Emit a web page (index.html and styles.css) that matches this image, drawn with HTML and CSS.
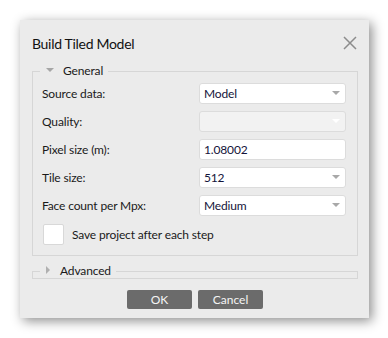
FILE: index.html
```html
<!DOCTYPE html>
<html>
<head>
    <title>Build Tiled Model</title>
    <link rel="stylesheet" href="styles.css">
</head>
<body>
    <div class="dialog">
        <!-- Title bar -->
        <div class="dialog-header">
            <span class="dialog-title">Build Tiled Model</span>
            <svg class="close" width="14" height="14" viewBox="0 0 14 14">
                <path d="M1 1 L13 13 M13 1 L1 13" stroke="#8c8c8c" stroke-width="1.5" fill="none"/>
            </svg>
        </div>

        <!-- General group -->
        <div class="group">
            <div class="group-title">
                <span class="arrow-down"></span>
                <span>General</span>
            </div>
            <div class="form-grid">
                <label>Source data:</label>
                <div class="combo">Model<span class="combo-arrow"></span></div>

                <label>Quality:</label>
                <div class="combo disabled"><span class="combo-arrow"></span></div>

                <label>Pixel size (m):</label>
                <div class="field">1.08002</div>

                <label>Tile size:</label>
                <div class="combo">512<span class="combo-arrow"></span></div>

                <label>Face count per Mpx:</label>
                <div class="combo">Medium<span class="combo-arrow"></span></div>
            </div>
            <div class="check-row">
                <span class="checkbox"></span>
                <span>Save project after each step</span>
            </div>
        </div>

        <!-- Advanced group (collapsed) -->
        <div class="group collapsed">
            <div class="group-title">
                <span class="arrow-right"></span>
                <span>Advanced</span>
            </div>
        </div>

        <!-- Buttons -->
        <div class="buttons">
            <button class="btn">OK</button>
            <button class="btn">Cancel</button>
        </div>
    </div>
</body>
</html>
```

FILE: styles.css
```css
/* Page */
body {
    margin: 0;
    padding: 20px;
    background-color: #ffffff;
    font-family: Lato, "Noto Sans", sans-serif;
    font-size: 12px;
    letter-spacing: -0.15px;
    color: #1a1a1a;
}

/* Dialog window */
.dialog {
    width: 349px;
    height: 298px;
    box-sizing: border-box;
    padding: 8px 11px 0 12px;
    background-color: #ebebeb;
    box-shadow: 3px 3px 11px rgba(0, 0, 0, 0.45);
}

.dialog-header {
    display: flex;
    justify-content: space-between;
    align-items: center;
    height: 30px;
}

.dialog-title {
    font-size: 14px;
    letter-spacing: -0.3px;
    color: #111;
}

.close {
    margin-right: 1px;
}

/* Group boxes */
.group {
    border: 1px solid #d6d6d6;
    margin-top: 13px;
    padding: 0 11px 10px 9px;
}

.group-title {
    display: flex;
    align-items: center;
    gap: 9px;
    width: fit-content;
    height: 12px;
    margin: -8px 0 7px -2px;
    padding: 0 5px 0 6px;
    background-color: #ebebeb;
}

.arrow-down {
    width: 0;
    height: 0;
    border-left: 4px solid transparent;
    border-right: 4px solid transparent;
    border-top: 4px solid #a6a6a6;
}

.arrow-right {
    width: 0;
    height: 0;
    border-top: 4px solid transparent;
    border-bottom: 4px solid transparent;
    border-left: 4px solid #b0b0b0;
}

.group.collapsed {
    height: 6px;
    padding-bottom: 0;
    margin-top: 15px;
}

.group.collapsed .group-title {
    gap: 10px;
}

/* Form rows */
.form-grid {
    display: grid;
    grid-template-columns: 157px 147px;
    grid-auto-rows: 21px;
    row-gap: 7px;
    align-items: center;
}

.combo,
.field {
    position: relative;
    height: 21px;
    box-sizing: border-box;
    padding-left: 4px;
    line-height: 19px;
    background-color: #ffffff;
    border: 1px solid #dcdcdc;
    border-radius: 3px;
    color: #14143a;
}

.combo.disabled {
    background-color: #f2f2f2;
}

.combo-arrow {
    position: absolute;
    right: 5px;
    top: 7px;
    width: 0;
    height: 0;
    border-left: 4px solid transparent;
    border-right: 4px solid transparent;
    border-top: 4px solid #a8a8a8;
}

.combo.disabled .combo-arrow {
    border-top-color: #ffffff;
}

/* Checkbox */
.check-row {
    display: flex;
    align-items: center;
    gap: 8px;
    margin-top: 8px;
    margin-left: 1px;
}

.checkbox {
    width: 21px;
    height: 21px;
    box-sizing: border-box;
    background-color: #ffffff;
    border: 1px solid #d8d8d8;
    border-radius: 2px;
}

/* Buttons */
.buttons {
    display: flex;
    justify-content: center;
    gap: 6px;
    margin-top: 11px;
}

.btn {
    width: 65px;
    height: 19px;
    padding: 0;
    border: none;
    border-radius: 2px;
    background-color: #6b6b6b;
    color: #f4f4f4;
    font-family: Lato, "Noto Sans", sans-serif;
    font-size: 12px;
    line-height: 19px;
}
```
